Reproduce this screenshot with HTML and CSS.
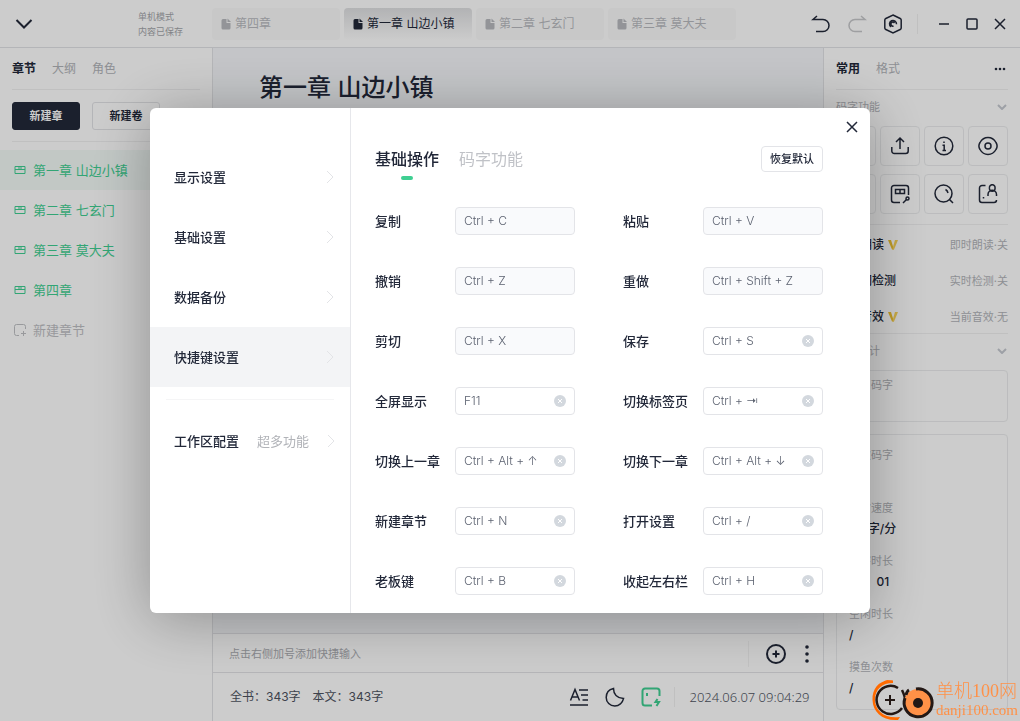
FILE: index.html
```html
<!DOCTYPE html>
<html lang="zh-CN">
<head>
<meta charset="utf-8">
<title>第一章 山边小镇</title>
<meta name="viewport" content="width=device-width, initial-scale=1">
<link rel="stylesheet" href="styles.css">
</head>
<body>
<svg class="defs" aria-hidden="true">
  <symbol id="doc" viewBox="0 0 10 12"><path d="M2 1H5.500V5H9.500V10A1.500 1.500 0 0 1 8 11.500H2A1.500 1.500 0 0 1 .5 10V2.500A1.500 1.500 0 0 1 2 1Z" fill="currentColor" stroke="none"/><path d="M6.500 .5L10 4H6.500Z" fill="currentColor" stroke="none"/></symbol>
  <symbol id="box" viewBox="0 0 12 10"><path d="M1 1.500H11V8.500H1ZM1 4.500H11M5 1.500V4.500M7 1.500V4.500" /></symbol>
  <symbol id="cross" viewBox="0 0 12 12"><path d="M1 1L11 11M11 1L1 11"/></symbol>
  <symbol id="right" viewBox="0 0 8 14"><path d="M1 1L7 7L1 13"/></symbol>
  <symbol id="down" viewBox="0 0 10 6"><path d="M1 1L5 5L9 1"/></symbol>
  <symbol id="vip" viewBox="0 0 10 10"><path d="M0 0H3L6 9.500H4Z" fill="#edc02f" stroke="none"/><path d="M7 0H10L6 9.500H4.500L5.500 5Z" fill="#f9d45a" stroke="none"/></symbol>
  <symbol id="clear" viewBox="0 0 12 12"><circle cx="6" cy="6" r="6" fill="#d3d8de" stroke="none"/><path d="M4 4L8 8M8 4L4 8" stroke="#fff" stroke-width="1"/></symbol>
</svg>

<div class="app">
  <header class="topbar">
    <div class="topbar-left">
      <button class="icon-btn" aria-label="收起"><svg width="18" height="10" viewBox="0 0 18 10"><path class="bold" d="M1.500 1L9 8.500L16.500 1"/></svg></button>
      <p class="save-state"><span>单机模式</span><span>内容已保存</span></p>
    </div>
    <nav class="doc-tabs">
      <button class="doc-tab"><svg width="10" height="12"><use href="#doc"/></svg>第四章</button>
      <button class="doc-tab current"><svg width="10" height="12"><use href="#doc"/></svg>第一章 山边小镇</button>
      <button class="doc-tab"><svg width="10" height="12"><use href="#doc"/></svg>第二章 七玄门</button>
      <button class="doc-tab"><svg width="10" height="12"><use href="#doc"/></svg>第三章 莫大夫</button>
    </nav>
    <div class="window-tools">
      <div class="history">
        <button class="icon-btn" aria-label="撤销"><svg width="20" height="20" viewBox="0 0 20 20"><path d="M6 2L2 5.500H12A6 6 0 0 1 12 17.500H5"/></svg></button>
        <button class="icon-btn faded" aria-label="重做"><svg width="20" height="20" viewBox="0 0 20 20"><path d="M14 2L18 5.500H8A6 6 0 0 0 8 17.500H15"/></svg></button>
        <button class="icon-btn" aria-label="设置"><svg width="20" height="20" viewBox="0 0 20 20"><path d="M10 1L17.200 4.500Q18.200 5 18.200 6V14Q18.200 15 17.200 15.500L10 19L2.800 15.500Q1.800 15 1.800 14V6Q1.800 5 2.800 4.500Z"/><path d="M8 12.800A3.500 3.500 0 1 1 13.500 10.200M11.500 9A2 2 0 1 0 10.500 12"/></svg></button>
      </div>
      <div class="window-controls">
        <button class="icon-btn" aria-label="最小化"><svg width="12" height="12" viewBox="0 0 12 12"><path d="M1 6H11"/></svg></button>
        <button class="icon-btn" aria-label="最大化"><svg width="12" height="12" viewBox="0 0 12 12"><rect x="1" y="1" width="10" height="10" rx="1"/></svg></button>
        <button class="icon-btn" aria-label="关闭"><svg width="12" height="12" viewBox="0 0 12 12"><path d="M1 1L11 11M11 1L1 11"/></svg></button>
      </div>
    </div>
  </header>

  <aside class="sidebar">
    <nav class="panel-tabs">
      <button class="panel-tab current">章节</button><button class="panel-tab">大纲</button><button class="panel-tab">角色</button>
    </nav>
    <div class="create-row">
      <button class="create primary">新建章</button><button class="create">新建卷</button>
    </div>
    <ul class="chapters">
      <li><a class="chapter current" href="#"><svg width="12" height="10"><use href="#box"/></svg>第一章 山边小镇</a></li>
      <li><a class="chapter" href="#"><svg width="12" height="10"><use href="#box"/></svg>第二章 七玄门</a></li>
      <li><a class="chapter" href="#"><svg width="12" height="10"><use href="#box"/></svg>第三章 莫大夫</a></li>
      <li><a class="chapter" href="#"><svg width="12" height="10"><use href="#box"/></svg>第四章</a></li>
      <li><button class="chapter add"><svg width="12" height="12" viewBox="0 0 12 12"><path d="M5 11.500H2.500A2 2 0 0 1 .5 9.500V2.500A2 2 0 0 1 2.500 .5H9.500A2 2 0 0 1 11.500 2.500V5M9.500 7V12M7 9.500H12"/></svg>新建章节</button></li>
    </ul>
  </aside>

  <main class="editor">
    <div class="page"><h1>第一章 山边小镇</h1></div>
    <div class="quick-row">
      <span class="hint">点击右侧加号添加快捷输入</span>
      <div class="quick-actions">
        <button class="icon-btn" aria-label="添加"><svg width="20" height="20" viewBox="0 0 20 20"><circle class="bold" cx="10" cy="10" r="9"/><path class="bold" d="M10 6.500V13.500M6.500 10H13.500"/></svg></button>
        <button class="icon-btn" aria-label="更多"><svg class="solid" width="4" height="20" viewBox="0 0 4 20"><circle cx="2" cy="3" r="1.800"/><circle cx="2" cy="10" r="1.800"/><circle cx="2" cy="17" r="1.800"/></svg></button>
      </div>
    </div>
    <footer class="status">
      <span>全书：343字</span><span>本文：343字</span>
      <div class="status-tools">
        <button class="icon-btn" aria-label="字体"><svg width="20" height="20" viewBox="0 0 20 20"><path d="M1.500 13.500L6 2.500L10.500 13.500M3 10H9M10 3H19M12 8H19M13.500 13H19M1 18H19"/></svg></button>
        <button class="icon-btn" aria-label="夜间模式"><svg width="20" height="20" viewBox="0 0 20 20"><path d="M8.500 1.500C8.500 7 12 11 18.500 11.500C17.500 16 14 19 9.800 19C5 19 1.200 15.300 1.200 10.500C1.200 6 4 2.500 8.500 1.500Z"/></svg></button>
        <button class="icon-btn green" aria-label="码字模式"><svg width="20" height="20" viewBox="0 0 20 20"><path class="bold" d="M11 18.500H4A2.500 2.500 0 0 1 1.500 16V4A2.500 2.500 0 0 1 4 1.500H16A2.500 2.500 0 0 1 18.500 4V9M6 6V9M16.500 12L14.500 15H18L15.500 19"/></svg></button>
      </div>
      <time>2024.06.07 09:04:29</time>
    </footer>
  </main>

  <aside class="tools">
    <nav class="panel-tabs">
      <button class="panel-tab current">常用</button><button class="panel-tab">格式</button>
      <button class="icon-btn more" aria-label="更多"><svg class="solid" width="12" height="4" viewBox="0 0 12 4"><circle cx="2" cy="2" r="1.300"/><circle cx="6" cy="2" r="1.300"/><circle cx="10" cy="2" r="1.300"/></svg></button>
    </nav>
    <h2 class="group-title">码字功能<svg width="10" height="6" stroke-width="2"><use href="#down"/></svg></h2>
    <div class="tiles">
      <button class="tile" aria-label="导入"><svg width="20" height="20" viewBox="0 0 20 20"><path d="M10 2V12M6 8L10 12L14 8M2 12V18H18V12"/></svg></button>
      <button class="tile" aria-label="导出"><svg width="20" height="20" viewBox="0 0 20 20"><path d="M10 13V2.500M6 6L10 2L14 6M1.800 11V15A2.500 2.500 0 0 0 4.300 17.500H15.700A2.500 2.500 0 0 0 18.200 15V11"/></svg></button>
      <button class="tile" aria-label="信息"><svg width="20" height="20" viewBox="0 0 20 20"><circle cx="10" cy="10" r="8.800"/><path d="M10 5.500V7M8.500 9.200H10.200V14.500M8.500 14.500H12"/></svg></button>
      <button class="tile" aria-label="查看"><svg width="20" height="20" viewBox="0 0 20 20"><path d="M10 1.500C13.500 1.500 16 3 18 6.500Q20.200 10 18 13.500C16 17 13.500 18.500 10 18.500C6.500 18.500 4 17 2 13.500Q-.2 10 2 6.500C4 3 6.500 1.500 10 1.500Z"/><circle cx="10" cy="10" r="3"/></svg></button>
      <button class="tile" aria-label="目录"><svg width="20" height="20" viewBox="0 0 20 20"><rect x="2" y="2" width="16" height="16" rx="3"/></svg></button>
      <button class="tile" aria-label="记录"><svg width="20" height="20" viewBox="0 0 20 20"><path d="M10 18.500H4A2.500 2.500 0 0 1 1.500 16V4A2.500 2.500 0 0 1 4 1.500H16A2.500 2.500 0 0 1 18.500 4V11M5.500 5.500H14.500V9.500H5.500ZM10 5.500V9.500M13 19L16.500 15.500"/><circle cx="17.500" cy="14.500" r="1.500"/></svg></button>
      <button class="tile" aria-label="搜索"><svg width="20" height="20" viewBox="0 0 20 20"><circle cx="9.500" cy="9.500" r="8.500"/><path d="M15.500 15.500L19 19M11.500 5.500Q13.500 6.500 14 9"/></svg></button>
      <button class="tile" aria-label="人物"><svg width="20" height="20" viewBox="0 0 20 20"><path d="M7.500 1.500H4A2.500 2.500 0 0 0 1.500 4V16A2.500 2.500 0 0 0 4 18.500H16A2.500 2.500 0 0 0 18.500 16M5.500 13V14.500M10 12V10.500A4 4 0 0 1 18.500 10.500V12M11.500 4A2.800 2.800 0 1 1 17 4A2.800 2.800 0 1 1 11.500 4"/></svg></button>
    </div>
    <ul class="features">
      <li><b>即时朗读</b><svg width="10" height="10"><use href="#vip"/></svg><span>即时朗读·关</span></li>
      <li><b>敏感词检测</b><span>实时检测·关</span></li>
      <li><b>码字音效</b><svg width="10" height="10"><use href="#vip"/></svg><span>当前音效·无</span></li>
    </ul>
    <h2 class="group-title">码字统计<svg width="10" height="6" stroke-width="2"><use href="#down"/></svg></h2>
    <dl class="card"><div><dt>今日码字</dt><dd>0</dd></div></dl>
    <dl class="card stats">
      <div><dt>本次码字</dt><dd>0</dd></div>
      <div><dt>实时速度</dt><dd>00 字/分</dd></div>
      <div><dt>码字时长</dt><dd>00：01</dd></div>
      <div><dt>空闲时长</dt><dd>/</dd></div>
      <div><dt>摸鱼次数</dt><dd>/</dd></div>
    </dl>
  </aside>
</div>

<div class="overlay">
  <section class="dialog" role="dialog" aria-modal="true" aria-label="设置">
    <nav class="settings-nav">
      <button class="nav-item">显示设置<svg width="8" height="14"><use href="#right"/></svg></button>
      <button class="nav-item">基础设置<svg width="8" height="14"><use href="#right"/></svg></button>
      <button class="nav-item">数据备份<svg width="8" height="14"><use href="#right"/></svg></button>
      <button class="nav-item current">快捷键设置<svg width="8" height="14"><use href="#right"/></svg></button>
      <hr>
      <button class="nav-item">工作区配置<small>超多功能</small><svg width="8" height="14"><use href="#right"/></svg></button>
    </nav>
    <div class="settings-body">
      <button class="close" aria-label="关闭"><svg width="12" height="12"><use href="#cross"/></svg></button>
      <header class="settings-head">
        <button class="mode current">基础操作</button>
        <button class="mode">码字功能</button>
        <button class="reset">恢复默认</button>
      </header>
      <div class="shortcuts">
        <div class="shortcut"><label for="k1">复制</label><span class="field locked"><input id="k1" value="Ctrl + C" readonly></span></div>
        <div class="shortcut"><label for="k2">粘贴</label><span class="field locked"><input id="k2" value="Ctrl + V" readonly></span></div>
        <div class="shortcut"><label for="k3">撤销</label><span class="field locked"><input id="k3" value="Ctrl + Z" readonly></span></div>
        <div class="shortcut"><label for="k4">重做</label><span class="field locked"><input id="k4" value="Ctrl + Shift + Z" readonly></span></div>
        <div class="shortcut"><label for="k5">剪切</label><span class="field locked"><input id="k5" value="Ctrl + X" readonly></span></div>
        <div class="shortcut"><label for="k6">保存</label><span class="field"><input id="k6" value="Ctrl + S"><button aria-label="清除"><svg width="12" height="12"><use href="#clear"/></svg></button></span></div>
        <div class="shortcut"><label for="k7">全屏显示</label><span class="field"><input id="k7" value="F11"><button aria-label="清除"><svg width="12" height="12"><use href="#clear"/></svg></button></span></div>
        <div class="shortcut"><label for="k8">切换标签页</label><span class="field"><input id="k8" value="Ctrl + ⇥"><button aria-label="清除"><svg width="12" height="12"><use href="#clear"/></svg></button></span></div>
        <div class="shortcut"><label for="k9">切换上一章</label><span class="field"><input id="k9" value="Ctrl + Alt + ↑"><button aria-label="清除"><svg width="12" height="12"><use href="#clear"/></svg></button></span></div>
        <div class="shortcut"><label for="k10">切换下一章</label><span class="field"><input id="k10" value="Ctrl + Alt + ↓"><button aria-label="清除"><svg width="12" height="12"><use href="#clear"/></svg></button></span></div>
        <div class="shortcut"><label for="k11">新建章节</label><span class="field"><input id="k11" value="Ctrl + N"><button aria-label="清除"><svg width="12" height="12"><use href="#clear"/></svg></button></span></div>
        <div class="shortcut"><label for="k12">打开设置</label><span class="field"><input id="k12" value="Ctrl + /"><button aria-label="清除"><svg width="12" height="12"><use href="#clear"/></svg></button></span></div>
        <div class="shortcut"><label for="k13">老板键</label><span class="field"><input id="k13" value="Ctrl + B"><button aria-label="清除"><svg width="12" height="12"><use href="#clear"/></svg></button></span></div>
        <div class="shortcut"><label for="k14">收起左右栏</label><span class="field"><input id="k14" value="Ctrl + H"><button aria-label="清除"><svg width="12" height="12"><use href="#clear"/></svg></button></span></div>
      </div>
    </div>
  </section>
</div>

<div class="watermark">
  <svg width="64" height="42" viewBox="0 0 64 42">
    <path d="M22 1.500C8 0 1 10 1.500 21C2 33 11 42 27 41L29 38C14 40 4 32 4 21C4 10 11 4 22 4Z" fill="#ff6a00"/>
    <path d="M11 4Q17-2 22 4Z" fill="#ff6a00"/>
    <path d="M27 9A14 14 0 1 0 31 29M31 11Q35 19 35 27" stroke="#231815" stroke-width="2.500"/>
    <path d="M19 16V26M14 21H24" stroke="#231815" stroke-width="2"/>
    <circle cx="47" cy="24" r="14" fill="#ff9147"/>
    <path d="M38 11Q36 12 35 16M45 10A14 14 0 1 1 34 19" stroke="#231815" stroke-width="3"/>
    <circle cx="47" cy="24" r="5" fill="#231815"/>
  </svg>
  <div class="watermark-text"><span>单机100网</span><small>danji100.com</small></div>
</div>
</body>
</html>
```
FILE: styles.css
```css
:root {
  --ink: #222839;
  --muted: #b1b3b8;
  --line: #e2e3e6;
  --green: #3fcf92;
}
* { box-sizing: border-box; }
body {
  margin: 0;
  color: var(--ink);
  font: 12px/16px Inter, "Noto Sans CJK SC", sans-serif;
}
button, input { font: inherit; color: inherit; }
button { padding: 0; border: 0; background: none; white-space: nowrap; cursor: pointer; }
svg { display: block; flex: none; fill: none; stroke: currentColor; }
svg.solid { fill: currentColor; stroke: none; }
ul, dl, dd, p, h1, h2 { margin: 0; padding: 0; list-style: none; }
.defs { display: none; }
.icon-btn { display: grid; place-items: center; }
.icon-btn path, .icon-btn rect, .tile svg, .close svg { stroke-width: 1.5; }
.icon-btn .bold { stroke-width: 2; }

.app {
  display: grid;
  grid-template: 48px 1fr / 213px 1fr 197px;
  height: 100vh;
  overflow: hidden;
}

/* Top bar */
.topbar {
  grid-column: 1 / -1;
  display: flex;
  align-items: center;
  border-bottom: 1px solid var(--line);
}
.topbar-left {
  display: flex;
  justify-content: space-between;
  align-items: center;
  width: 212px;
  padding: 0 29px 0 15px;
}
.save-state {
  display: grid;
  color: #a3a5aa;
  font-size: 9px;
  line-height: 15px;
}
.doc-tabs { display: flex; flex: 1; gap: 4px; }
.doc-tab {
  display: flex;
  align-items: center;
  gap: 4px;
  width: 128px;
  height: 32px;
  padding: 0 9px;
  border-radius: 4px;
  background: #fbfbfb;
  color: #b8babf;
}
.doc-tab.current {
  background: linear-gradient(#dfe0e2, #fff);
  color: var(--ink);
}
.window-tools { display: flex; align-items: center; padding-right: 14px; }
.history { display: flex; gap: 16px; padding-right: 14px; border-right: 1px solid #f0f0f0; }
.window-controls { display: flex; gap: 16px; padding-left: 20px; }
.faded { color: #c6c7ca; }

/* Side panels */
.sidebar { border-right: 1px solid var(--line); }
.panel-tabs {
  display: flex;
  gap: 16px;
  height: 42px;
  margin: 0 12px;
  border-bottom: 1px solid #f0f0f1;
}
.panel-tab { color: var(--muted); }
.panel-tab.current { color: var(--ink); font-weight: 700; }
.more { margin: 0 2px 0 auto; }
.create-row {
  display: flex;
  gap: 12px;
  margin: 0 12px;
  padding: 12px 0 11px;
  border-bottom: 1px solid #f0f0f1;
}
.create {
  width: 68px;
  height: 28px;
  border: 1px solid var(--line);
  border-radius: 3px;
  font-size: 11px;
  font-weight: 700;
}
.create.primary { border-color: var(--ink); background: var(--ink); color: #fff; }
.chapters { padding-top: 8px; }
.chapter {
  display: flex;
  align-items: center;
  gap: 7px;
  width: 100%;
  height: 40px;
  padding-left: 14px;
  color: var(--green);
  font-size: 13px;
  text-decoration: none;
}
.chapter.current { background: #f3faf7; }
.chapter.add { color: #bec0c4; }

/* Editor */
.editor { display: flex; flex-direction: column; min-width: 0; }
.page { flex: 1; padding: 22px 46px; background: #f5f7fa; }
.page h1 { font-size: 24px; line-height: 36px; font-weight: 500; }
.quick-row {
  display: flex;
  align-items: center;
  justify-content: space-between;
  height: 40px;
  padding: 1px 14px 0 16px;
  border-top: 1px solid var(--line);
  border-bottom: 1px solid var(--line);
}
.hint { color: #aaacb1; font-size: 11px; }
.quick-actions {
  display: flex;
  align-items: center;
  gap: 19px;
  height: 26px;
  padding-left: 17px;
  border-left: 1px solid #f3f3f3;
}
.status {
  display: flex;
  align-items: center;
  gap: 12px;
  height: 48px;
  padding: 0 11px 0 17px;
  color: #4e5360;
}
.status-tools {
  display: flex;
  gap: 16px;
  margin-left: auto;
  padding-right: 13px;
  border-right: 1px solid #f0f0f0;
  color: var(--ink);
}
.status time {
  min-width: 125px;
  font-family: "Noto Sans", sans-serif;
  font-size: 13px;
  font-weight: 300;
  text-align: center;
}
.icon-btn.green { color: var(--green); }

/* Tool panel */
.tools { overflow: hidden; border-left: 1px solid var(--line); }
.group-title {
  display: flex;
  align-items: center;
  justify-content: space-between;
  height: 33px;
  padding: 0 13px 0 12px;
  color: var(--muted);
  font-size: 11px;
  font-weight: 400;
}
.group-title svg { color: #c5c9d0; }
.tiles {
  display: grid;
  grid-template-columns: repeat(4, 1fr);
  gap: 8px 4px;
  margin: 0 12px;
  padding: 3px 0 10px;
}
.tile {
  display: grid;
  place-items: center;
  height: 40px;
  border: 1px solid #ebecee;
  border-radius: 4px;
}
.features {
  display: grid;
  gap: 16px;
  margin: 0 12px;
  padding: 10px 0 6px;
  border-top: 1px solid #f0f0f1;
  border-bottom: 1px solid #f0f0f1;
}
.features li { display: flex; align-items: center; gap: 4px; height: 20px; }
.features b { font-weight: 500; }
.features span { margin-left: auto; color: var(--muted); font-size: 11px; }
.card {
  margin: 3px 12px 0;
  padding: 4px 12px;
  border: 1px solid #ebecee;
  border-radius: 4px;
}
.card.stats { display: grid; gap: 11px; margin-top: 12px; padding: 10px 12px; }
.card dt { color: var(--muted); font-size: 11px; line-height: 20px; }
.card dd { font-weight: 500; line-height: 22px; }

/* Settings dialog */
.overlay {
  position: fixed;
  inset: 0;
  display: grid;
  place-items: center;
  background: rgb(0 0 0 / 20%);
}
.dialog {
  display: grid;
  grid-template-columns: 201px minmax(0, 1fr);
  width: min(720px, 100%);
  overflow: hidden;
  border-radius: 6px;
  background: #fff;
  box-shadow: 0 6px 60px rgb(0 0 0 / 30%);
}
.settings-nav { padding-top: 39px; border-right: 1px solid #e6e7eb; }
.nav-item {
  display: flex;
  align-items: center;
  gap: 18px;
  width: 100%;
  height: 60px;
  padding: 0 16px 0 24px;
  font-size: 13px;
  font-weight: 500;
}
.nav-item.current { background: #f3f4f6; }
.nav-item svg { margin-left: auto; color: #e3e4e7; }
.nav-item small { color: var(--muted); font-size: 13px; font-weight: 400; }
.settings-nav hr { margin: 12px 16px 11px; border: 0; border-top: 1px solid #f5f5f6; }
.settings-body { position: relative; padding: 38px 47px 2px 24px; }
.close { position: absolute; top: 13px; right: 12px; }
.settings-head { display: flex; gap: 20px; height: 45px; }
.mode {
  display: flex;
  flex-direction: column;
  align-items: center;
  gap: 4px;
  height: 36px;
  color: #c0c2c7;
  font-size: 16px;
  line-height: 26px;
}
.mode.current { color: var(--ink); font-weight: 500; }
.mode.current::after {
  content: "";
  width: 12px;
  height: 4px;
  border-radius: 2px;
  background: var(--green);
}
.reset {
  width: 62px;
  height: 26px;
  margin-left: auto;
  border: 1px solid #e3e4e8;
  border-radius: 4px;
  font-size: 11px;
  font-weight: 500;
}
.shortcuts {
  display: grid;
  grid-template-columns: repeat(2, minmax(0, 1fr));
  column-gap: 48px;
}
.shortcut {
  display: grid;
  grid-template-columns: 80px minmax(0, 1fr);
  align-items: center;
  height: 60px;
}
.shortcut label { font-size: 13px; font-weight: 500; white-space: nowrap; }
.field {
  display: flex;
  align-items: center;
  height: 28px;
  padding: 0 8px;
  border: 1px solid #e3e4e8;
  border-radius: 4px;
}
.field.locked { background: #f9fafc; }
.field input {
  flex: 1;
  min-width: 0;
  padding: 0;
  border: 0;
  outline: 0;
  background: none;
  color: #5c6270;
  font-weight: 300;
}

/* Site mark */
.watermark {
  position: fixed;
  right: 2px;
  bottom: 0;
  display: flex;
  align-items: center;
  gap: 1px;
}
.watermark svg { stroke: none; }
.watermark-text {
  display: grid;
  color: #ff9147;
  font-family: "Liberation Serif", "Noto Sans CJK SC", serif;
}
.watermark-text span { font-size: 18px; line-height: 20px; font-weight: 300; }
.watermark-text small { font-size: 15px; line-height: 18px; }
```
